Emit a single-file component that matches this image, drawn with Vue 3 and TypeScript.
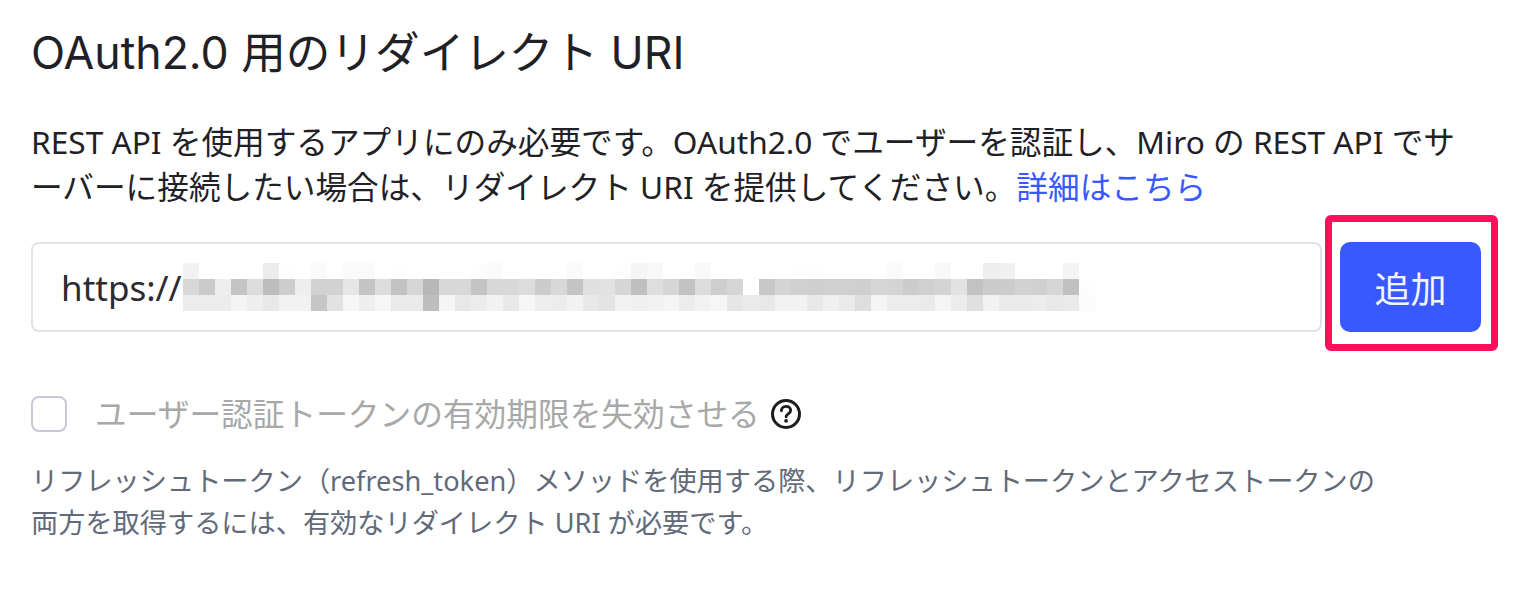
<script setup lang="ts">
const rows: string[] = [
  'f2 ff ff ff ff ec fe ff fa ff fa fa ff fd ff ff ff ff fd fa ff ff ff ff fa ff ff fd f5 f8 ff ff f9 ff ff ff ff ff fe fd ff ff ff ff fa ff ff f8 ff ff ee f0 ff ff ff f4 ff',
  'd8 cb ee c4 dd bd cd ee d2 d2 e6 c4 dd c2 d6 b8 d8 d8 c4 d8 d8 dc cc d8 c4 e0 e2 d6 bf de d6 c2 dc ce d6 ff c8 d4 d0 cf d0 d0 cf d6 d4 cc d0 d4 e2 c2 cc cc d2 d0 d6 c0 fd',
  'ec ec ec f4 ee e8 f2 f2 c6 e2 f6 ee f6 ea ea be f5 e8 ec f2 e8 f6 ee ec f2 e8 e4 f2 f0 f2 f5 ec f2 f6 e6 ea e8 f2 f2 e8 f0 ea de f5 ec ec ea f5 ec e0 f2 ea ea ec e8 ea fc'
]
const cells: string[] = rows.flatMap((row) => row.split(' ').map((v) => `#${v}${v}${v}`))
</script>

<template>
  <main class="panel">
    <h2 class="title">OAuth2.0 用のリダイレクト URI</h2>
    <p class="desc">
      REST API を使用するアプリにのみ必要です。OAuth2.0 でユーザーを認証し、Miro の REST API でサーバーに接続したい場合は、リダイレクト URI を提供してください。<a class="link" href="#">詳細はこちら</a>
    </p>
    <div class="uri-row">
      <div class="uri-input">
        <span class="uri-text">https://</span>
        <div class="mosaic" aria-hidden="true">
          <i v-for="(c, i) in cells" :key="i" :style="{ background: c }"></i>
        </div>
      </div>
      <button class="add" type="button">追加<span class="marker"></span></button>
    </div>
    <div class="check-row">
      <span class="checkbox"></span>
      <span class="check-label">ユーザー認証トークンの有効期限を失効させる</span>
      <svg class="help" viewBox="0 0 32 32" width="32" height="32" fill="none">
        <circle cx="16" cy="16" r="13.5" stroke="#1c1c1e" stroke-width="3" />
        <path d="M11.4 12.8c0-2.7 2-4.4 4.7-4.4s4.6 1.6 4.6 3.9c0 3.6-4.6 3.6-4.6 6.6" stroke="#1c1c1e" stroke-width="2.8" stroke-linecap="round" />
        <circle cx="16.1" cy="22.8" r="1.9" fill="#1c1c1e" />
      </svg>
    </div>
    <p class="note">
      リフレッシュトークン（refresh_token）メソッドを使用する際、リフレッシュトークンとアクセストークンの<br />両方を取得するには、有効なリダイレクト URI が必要です。
    </p>
  </main>
</template>

<style>
html, body { margin: 0; background: #fff; }
</style>

<style scoped>
.panel {
  box-sizing: border-box;
  width: 1532px;
  height: 616px;
  padding: 27px 34px 0 31px;
  background: #fff;
  font-family: "Noto Sans", "Noto Sans CJK JP", sans-serif;
  overflow: hidden;
}
.title {
  margin: 0;
  font-family: Inter, "Noto Sans CJK JP", sans-serif;
  font-size: 44.6px;
  line-height: 52px;
  font-weight: 400;
  color: #1f2126;
}
.desc {
  margin: 40px 40px 0 0;
  font-size: 31.65px;
  line-height: 45px;
  color: #1f2126;
}
.link { color: #3859ff; text-decoration: none; }
.uri-row {
  display: flex;
  gap: 18px;
  margin-top: 33px;
}
.uri-input {
  box-sizing: border-box;
  flex: 0 0 1291px;
  height: 90px;
  border: 2px solid #e0e2e8;
  border-radius: 8px;
  display: flex;
  align-items: center;
  padding-left: 28px;
  font-size: 35px;
  color: #2a2c31;
}
.uri-text { width: 122px; flex: none; white-space: nowrap; }
.mosaic {
  display: grid;
  grid-template-columns: repeat(57, 16px);
  grid-auto-rows: 16px;
  margin-top: -1px;
}
.mosaic i { display: block; }
.add {
  position: relative;
  flex: 0 0 141px;
  height: 90px;
  border: none;
  border-radius: 10px;
  background: #3859ff;
  color: #f2f4ff;
  font-family: "Noto Sans CJK JP", sans-serif;
  font-size: 36px;
  font-weight: 400;
  padding: 0;
}
.marker {
  position: absolute;
  left: -15px;
  top: -27px;
  width: 173px;
  height: 136px;
  box-sizing: border-box;
  border: 7px solid #ff0f5a;
  border-radius: 6px;
}
.check-row {
  display: flex;
  align-items: center;
  margin-top: 64px;
}
.checkbox {
  box-sizing: border-box;
  width: 36px;
  height: 36px;
  border: 2px solid #c7cad5;
  border-radius: 8px;
  flex: none;
}
.check-label {
  margin-left: 28px;
  font-size: 31.7px;
  line-height: 36px;
  color: #a8a8a8;
}
.help { margin-left: 10px; flex: none; }
.note {
  margin: 28px 0 0;
  font-size: 27.2px;
  line-height: 42px;
  color: #626a7a;
}
</style>
